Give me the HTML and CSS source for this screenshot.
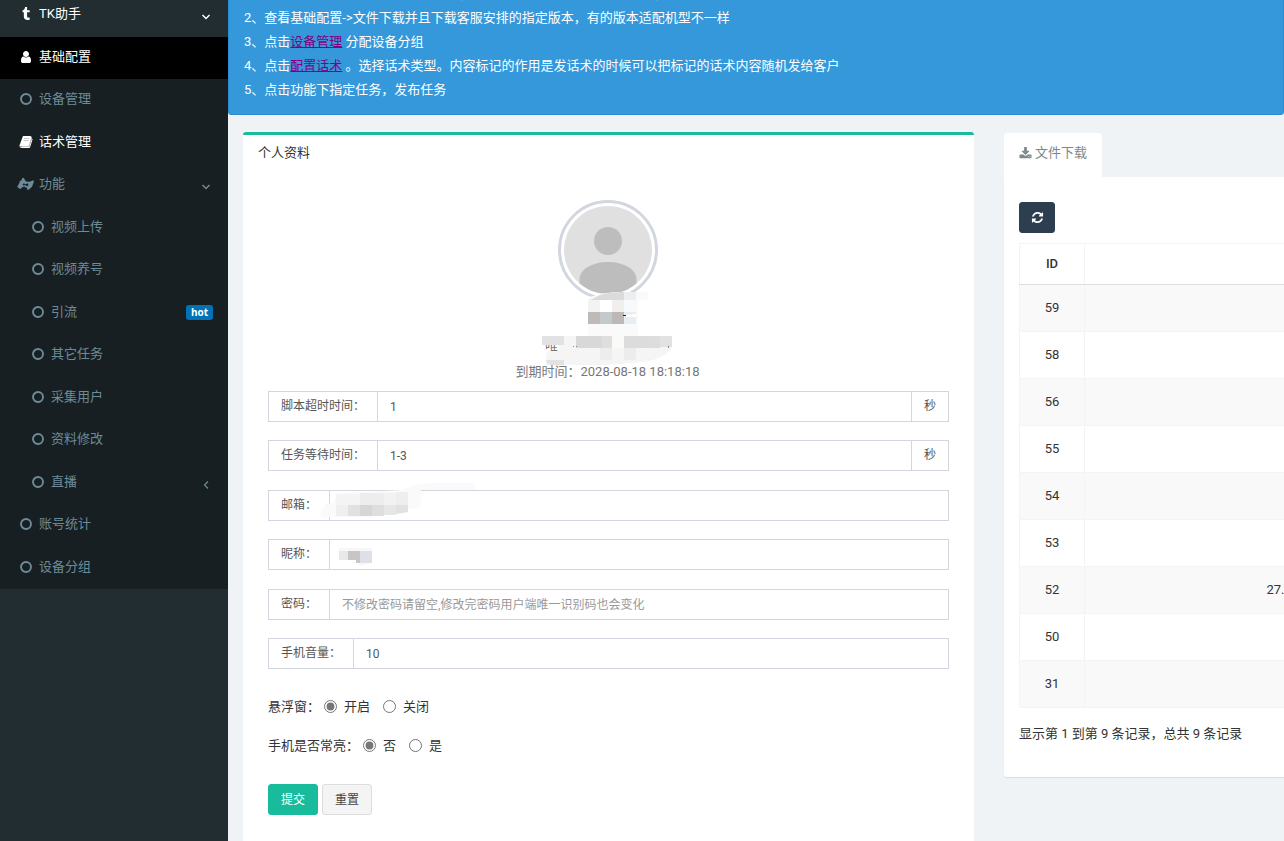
FILE: index.html
```html
<!DOCTYPE html>
<html lang="zh-CN">
<head>
<meta charset="utf-8">
<title>TK助手</title>
<link rel="stylesheet" href="styles.css">
</head>
<body>
<svg class="sprite" aria-hidden="true">
  <symbol id="tumblr" viewBox="0 0 1792 1792"><path d="M1328 1329l80 237q-23 35-111 66t-177 32q-104 2-190.5-26t-142.5-74-95-106-55.5-120-16.5-118v-544h-168v-215q72-26 129-69.5t91-90 58-102 34-99 15-88.5q1-5 4.5-8.5t7.5-3.5h244v424h333v252h-334v518q0 30 6.5 56t22.5 52.5 49.5 41.5 81.5 14q78-2 134-29z"/></symbol>
  <symbol id="user" viewBox="0 0 1792 1792"><path d="M1536 1399q0 109-62.500 187t-150.500 78h-854q-88 0-150.500-78t-62.500-187q0-85 8.500-160.500t31.500-152 58.500-131 94-89 134.500-34.500q131 128 313 128t313-128q76 0 134.500 34.500t94 89 58.500 131 31.500 152 8.500 160.500zm-256-887q0 159-112.500 271.500t-271.500 112.500-271.500-112.500-112.500-271.500 112.500-271.500 271.500-112.500 271.500 112.500 112.500 271.500z"/></symbol>
  <symbol id="book" viewBox="0 0 1792 1792"><path d="M420 1560L180 1440 560 200h1010l80 200-330 1120z" opacity=".75"/><path d="M1703 478q40 57 18 129l-275 906q-19 64-76.500 107.500t-122.500 43.500h-923q-77 0-148.500-53.500t-99.500-131.500q-24-67-2-127 0-4 3-27t4-37q1-8-3-21.500t-3-19.500q2-11 8-21t16.500-23.500 16.500-23.500q23-38 45-91.500t30-91.500q3-10 .5-30t-.5-28q3-11 17-28t17-23q21-36 42-92t25-90q1-9-2.500-32t.5-28q4-13 22-30.500t22-22.500q19-26 42.500-84.500t27.500-96.500q1-8-3-25.500t-2-26.500q2-8 9-18t18-23 17-21q8-12 16.500-30.500t15-35 16-36 19.500-32 26.500-23.500 36-11.500 47.500 5.500l-1 3q38-9 51-9h761q74 0 114 56t18 130l-274 906q-36 119-71.500 153.500t-128.500 34.500h-869q-27 0-38 15-11 16-1 43 24 70 144 70h923q29 0 56-15.500t35-41.500l300-987q7-22 5-57 38 15 59 43zm-1064 2q-4 13 2 22.500t20 9.500h608q13 0 25.500-9.500t16.500-22.500l21-64q4-13-2-22.500t-20-9.500h-608q-13 0-25.500 9.500t-16.500 22.500zm-83 256q-4 13 2 22.500t20 9.500h608q13 0 25.500-9.500t16.500-22.500l21-64q4-13-2-22.500t-20-9.500h-608q-13 0-25.500 9.500t-16.500 22.500z"/></symbol>
  <symbol id="ring" viewBox="0 0 14 14"><circle cx="7" cy="7" r="5" fill="none" stroke="currentColor" stroke-width="1.900"/></symbol>
  <symbol id="hands" viewBox="0 0 18 14"><path d="M5.500 1L7 .5l1 1.600 1.500 2.200 3.500.3L17.500 3l.4 1.500-2 5.500-3.500 3-2-.2.500-1.800-1.900-.3-1-1-2.500.8-1.500 1.500H2.500L.2 10l2.300-4L3 3.500l1.200.3zM7.500 6L6 7.500l.6 1.200L8.800 8l.8.9 1.600.4.900-1.500-1-1.600-2 1L8 7.300z" fill-rule="evenodd"/></symbol>
  <symbol id="down" viewBox="0 0 10 10"><path d="M1.500 3L5 6.500 8.500 3" fill="none" stroke="currentColor" stroke-width="1.500"/></symbol>
  <symbol id="left" viewBox="0 0 10 10"><path d="M7 1.500L3.500 5 7 8.500" fill="none" stroke="currentColor" stroke-width="1.200"/></symbol>
  <symbol id="download" viewBox="0 0 1792 1792"><path d="M1344 1344q0-26-19-45t-45-19-45 19-19 45 19 45 45 19 45-19 19-45zm256 0q0-26-19-45t-45-19-45 19-19 45 19 45 45 19 45-19 19-45zm128-224v320q0 40-28 68t-68 28h-1472q-40 0-68-28t-28-68v-320q0-40 28-68t68-28h465l135 136q58 56 136 56t136-56l136-136h464q40 0 68 28t28 68zm-325-569q17 41-14 70l-448 448q-18 19-45 19t-45-19l-448-448q-31-29-14-70 17-39 59-39h256v-448q0-26 19-45t45-19h256q26 0 45 19t19 45v448h256q42 0 59 39z"/></symbol>
  <symbol id="refresh" viewBox="0 0 1792 1792"><path d="M1639 1056q0 5-1 7-64 268-268 434.500t-478 166.500q-146 0-282.500-55t-243.500-157l-129 129q-19 19-45 19t-45-19-19-45v-448q0-26 19-45t45-19h448q26 0 45 19t19 45-19 45l-137 137q71 66 161 102t187 36q134 0 250-65t186-179q11-17 53-117 8-23 30-23h192q13 0 22.500 9.500t9.500 22.500zm25-800v448q0 26-19 45t-45 19h-448q-26 0-45-19t-19-45 19-45l138-138q-148-137-349-137-134 0-250 65t-186 179q-11 17-53 117-8 23-30 23h-199q-13 0-22.500-9.500t-9.500-22.500v-7q65-268 270-434.500t480-166.500q146 0 284 55.500t245 156.500l130-129q19-19 45-19t45 19 19 45z"/></symbol>
</svg>
<div class="app">
  <nav class="sidebar">
    <a class="item brand" href="#"><svg class="icon"><use href="#tumblr"/></svg><span>TK助手</span><svg class="arrow"><use href="#down"/></svg></a>
    <ul class="menu">
      <li><a class="item active" href="#"><svg class="icon"><use href="#user"/></svg><span>基础配置</span></a></li>
      <li><a class="item" href="#"><svg class="icon"><use href="#ring"/></svg><span>设备管理</span></a></li>
      <li><a class="item bright" href="#"><svg class="icon"><use href="#book"/></svg><span>话术管理</span></a></li>
      <li><a class="item" href="#"><svg class="icon wide"><use href="#hands"/></svg><span>功能</span><svg class="arrow"><use href="#down"/></svg></a></li>
      <li>
        <ul class="menu sub">
          <li><a class="item" href="#"><svg class="icon"><use href="#ring"/></svg><span>视频上传</span></a></li>
          <li><a class="item" href="#"><svg class="icon"><use href="#ring"/></svg><span>视频养号</span></a></li>
          <li><a class="item" href="#"><svg class="icon"><use href="#ring"/></svg><span>引流</span><small class="hot">hot</small></a></li>
          <li><a class="item" href="#"><svg class="icon"><use href="#ring"/></svg><span>其它任务</span></a></li>
          <li><a class="item" href="#"><svg class="icon"><use href="#ring"/></svg><span>采集用户</span></a></li>
          <li><a class="item" href="#"><svg class="icon"><use href="#ring"/></svg><span>资料修改</span></a></li>
          <li><a class="item" href="#"><svg class="icon"><use href="#ring"/></svg><span>直播</span><svg class="arrow"><use href="#left"/></svg></a></li>
        </ul>
      </li>
      <li><a class="item" href="#"><svg class="icon"><use href="#ring"/></svg><span>账号统计</span></a></li>
      <li><a class="item" href="#"><svg class="icon"><use href="#ring"/></svg><span>设备分组</span></a></li>
    </ul>
  </nav>
  <main class="main">
    <div class="notice">
      <p>1、先查看基础配置文件下载一份教程，配置环境下载必须要下载才可以，配置环境才能使用所有功能</p>
      <p>2、查看基础配置-&gt;文件下载并且下载客服安排的指定版本，有的版本适配机型不一样</p>
      <p>3、点击<a href="#">设备管理</a> 分配设备分组</p>
      <p>4、点击<a href="#">配置话术</a> 。选择话术类型。内容标记的作用是发话术的时候可以把标记的话术内容随机发给客户</p>
      <p>5、点击功能下指定任务，发布任务</p>
    </div>
    <div class="columns">
      <section class="panel profile">
        <h1 class="title">个人资料</h1>
        <div class="summary">
          <svg class="avatar" viewBox="0 0 100 100" role="img" aria-label="头像">
            <clipPath id="face"><circle cx="50" cy="50" r="44"/></clipPath>
            <circle cx="50" cy="50" r="48.500" fill="#fff" stroke="#d2d6de" stroke-width="3"/>
            <g clip-path="url(#face)"><rect width="100" height="100" fill="#e0e0e0"/><circle cx="50" cy="41" r="14" fill="#bdbdbd"/><path d="M21.500 100V78C23 68 36 62 50 62s27 6 28.500 16v22z" fill="#bdbdbd"/></g>
          </svg>
          <p class="uid">唯</p>
          <p class="expiry">到期时间：2028-08-18 18:18:18</p>
          <svg class="mask" viewBox="0 0 132 78" aria-hidden="true">
            <path d="M48 5Q62 0 80 0h26v8H96v36H46V6z" fill="#fafafa"/>
            <path d="M58 3Q68 0 82 0v8H48z" fill="#dadbdd"/><path d="M82 0h12v8H82z" fill="#eceef2"/>
            <path d="M46 8h12v12H46z" fill="#f3f3f2"/><path d="M58 8h12v12H58z" fill="#fff"/><path d="M70 8h12v12H70z" fill="#f0eeee"/><path d="M82 8h12v12H82z" fill="#f7f9fb"/>
            <path d="M46 20h12v12H46z" fill="#bebab7"/><path d="M58 20h12v12H58z" fill="#c4c9cc"/><path d="M70 20h12v12H70z" fill="#bdb7b5"/><path d="M82 20h12v12H82z" fill="#e8edf2"/><path d="M81 23h3v1h-3z" fill="#222"/><path d="M84 23l10-1v3H84z" fill="#fff"/>
            <path d="M0 44h130v9q-1 9-19 15-30 6-76 5H4V65q0-5 3-6h10v-6H0z" fill="#f5f5f5"/>
            <path d="M0 44h22v9H0z" fill="#e2e2e2"/><path d="M34 44h26v12H34z" fill="#d9d8d8"/><path d="M60 44h10v12H60z" fill="#dedede"/><path d="M70 44h12v12H70z" fill="#fafaf9"/><path d="M82 44h24v12H82z" fill="#dddcdc"/><path d="M106 44h12v12h-12z" fill="#ddd"/><path d="M118 44h12v11h-12z" fill="#e2e2e2"/>
            <path d="M4 68h18v5H8q-3-1-4-5z" fill="#e2e2e2"/><path d="M82 56h12v12H82z" fill="#ececec"/><path d="M58 56h12v12H58z" fill="#ededed"/>
            <path d="M31 54h1v1h-1zM34 54h1v1h-1zM126 54h1v2h-1z" fill="#888"/>
          </svg>
        </div>
        <form class="form">
          <div class="group"><label for="timeout">脚本超时时间：</label><input id="timeout" value="1"><span class="unit">秒</span></div>
          <div class="group"><label for="wait">任务等待时间：</label><input id="wait" value="1-3"><span class="unit">秒</span></div>
          <div class="group"><label for="email">邮箱：</label><input id="email">
            <svg class="mask-email" viewBox="0 0 156 34" aria-hidden="true">
              <path d="M18 10l66-3Q94 0 116 0h40v7h-54v17q-20 3-38 8-30 6-62 2V26H6v-5l8-1z" fill="#fafafa"/>
              <path d="M17 11h24v11H17z" fill="#f5f4f4"/><path d="M41 10h24v12H41z" fill="#ededed"/><path d="M65 10h12v12H65z" fill="#f2f2f2"/><path d="M77 9h12v13H77z" fill="#eee"/>
              <path d="M17 22h12v11H17z" fill="#f0eeee"/><path d="M29 22h12v11H29z" fill="#e1e1e1"/><path d="M41 22h12v11H41z" fill="#d6d6d6"/><path d="M53 22h12v11H53z" fill="#dedede"/><path d="M65 22h12v10H65z" fill="#e5e7e7"/><path d="M77 22h12v7l-12 2z" fill="#e3e0e2"/>
            </svg>
          </div>
          <div class="group"><label for="nick">昵称：</label><input id="nick">
            <svg class="mask-nick" viewBox="0 0 34 18" aria-hidden="true"><path d="M0 0h33v15l-13 3V12H0z" fill="#f7f7f7"/><path d="M0 3h9v9H0z" fill="#e9e8e7"/><path d="M9 3h12v12h-4v-3H9z" fill="#c8c6c4"/><path d="M21 3h12v12H21z" fill="#dde1e7"/></svg>
          </div>
          <div class="group"><label for="pass">密码：</label><input id="pass" type="password" placeholder="不修改密码请留空,修改完密码用户端唯一识别码也会变化"></div>
          <div class="group"><label for="volume">手机音量：</label><input id="volume" value="10"></div>
          <div class="choices" role="radiogroup" aria-label="悬浮窗"><span>悬浮窗：</span><label><input type="radio" name="float" checked>开启</label><label><input type="radio" name="float">关闭</label></div>
          <div class="choices" role="radiogroup" aria-label="手机是否常亮"><span>手机是否常亮：</span><label><input type="radio" name="awake" checked>否</label><label><input type="radio" name="awake">是</label></div>
          <div class="actions"><button class="btn submit" type="submit">提交</button><button class="btn" type="reset">重置</button></div>
        </form>
      </section>
      <section class="files">
        <a class="tab" href="#"><svg class="icon"><use href="#download"/></svg>文件下载</a>
        <div class="pane">
          <button class="btn refresh" type="button" aria-label="刷新"><svg class="icon"><use href="#refresh"/></svg></button>
          <table class="table">
            <colgroup><col class="col-id"><col class="col-version"><col></colgroup>
            <thead><tr><th>ID</th><th></th><th></th></tr></thead>
            <tbody>
              <tr><td>59</td><td></td><td></td></tr>
              <tr><td>58</td><td></td><td></td></tr>
              <tr><td>56</td><td></td><td></td></tr>
              <tr><td>55</td><td></td><td></td></tr>
              <tr><td>54</td><td></td><td></td></tr>
              <tr><td>53</td><td></td><td></td></tr>
              <tr><td>52</td><td>27.</td><td></td></tr>
              <tr><td>50</td><td></td><td></td></tr>
              <tr><td>31</td><td></td><td></td></tr>
            </tbody>
          </table>
          <p class="count">显示第 1 到第 9 条记录，总共 9 条记录</p>
        </div>
      </section>
    </div>
  </main>
</div>
</body>
</html>
```
FILE: styles.css
```css
* { box-sizing: border-box; }
body {
  margin: 0;
  overflow: hidden;
  background: #eff3f6;
  color: #333;
  font: 13px/18px Roboto, "Noto Sans CJK SC", sans-serif;
}
p, h1, ul { margin: 0; padding: 0; }
ul { list-style: none; }
.sprite { display: none; }
.app { display: flex; height: 100vh; overflow: hidden; }

.sidebar { flex: 0 0 228px; background: #222d32; }
.item {
  display: flex;
  align-items: center;
  padding: 11px 15px 13px;
  color: #6c8b99;
  text-decoration: none;
}
.icon { width: 13px; height: 13px; fill: currentColor; }
.item .icon { flex: none; width: 14px; height: 14px; margin: 0 6px 0 4px; }
.item .icon.wide { width: 17px; margin: 0 5px 0 2px; }
.arrow { width: 10px; height: 10px; margin: 5px 2px 0 auto; }
.item.brand { height: 37px; padding: 0 15px 9px; color: #fff; }
.menu { background: #181f22; }
.menu > li:nth-child(even) { padding-bottom: 1px; }
.item.active { background: #000; color: #fff; }
.item.bright { color: #fff; }
.sub .item { padding-left: 27px; }
.hot {
  margin-left: auto;
  padding: 0 5px;
  border-radius: 3px;
  background: #0073b7;
  color: #fff;
  font: bold 10px/15px "Open Sans", sans-serif;
}

.main { flex: 1; min-width: 0; }
.notice {
  margin-top: -19px;
  padding: 0 15px 12px;
  border: 1px solid #2a8bcf;
  border-radius: 3px;
  background: #3598db;
  color: #fff;
  line-height: 24px;
}
.notice a { color: #800080; text-decoration: underline; }
.columns {
  display: grid;
  grid-template-columns: repeat(2, 71.25%);
  gap: 30px;
  padding: 17px 15px 0;
}
.panel {
  min-height: 100vh;
  border-top: 3px solid #18bc9c;
  border-radius: 3px 3px 0 0;
  background: #fff;
}
.title { padding: 9px 15px; font-size: 13px; font-weight: 400; }
.summary {
  position: relative;
  display: flex;
  flex-direction: column;
  align-items: center;
  padding: 29px 2px 0 0;
  color: #777;
}
.avatar { width: 100px; height: 100px; }
.uid { margin-top: 37px; padding-right: 112px; }
.expiry { margin-top: 8px; }
.mask { position: absolute; top: 121px; left: calc(50% - 67px); width: 132px; }

.form { padding: 10px 25px; }
.group { position: relative; display: flex; height: 31px; margin-bottom: 18px; font-size: 12px; }
.group:nth-child(even) { margin-bottom: 19px; }
.group label, .unit { padding: 5px 12px; border: 1px solid #d2d6de; color: #555; }
.group label { border-right: 0; }
.unit { border-left: 0; }
.group input {
  flex: 1;
  min-width: 0;
  padding: 5px 12px;
  border: 1px solid #d2d6de;
  background: #fff;
  color: #555;
  font: inherit;
}
.group input::placeholder { color: #999; }
.mask-email { position: absolute; top: -7px; left: 51px; width: 156px; }
.mask-nick { position: absolute; top: 9px; left: 71px; width: 34px; }
.choices { display: flex; align-items: center; height: 39px; padding-bottom: 2px; }
.choices label { display: flex; align-items: center; margin-right: 13px; }
.choices input { width: 13px; height: 13px; margin: 0 7px 0 0; accent-color: #767676; }
.choices span { margin-right: 4px; }
.actions { display: flex; gap: 4px; margin-top: 18px; }
.btn {
  height: 31px;
  padding: 0 12px;
  border: 1px solid #ddd;
  border-radius: 3px;
  background: #f4f4f4;
  color: #444;
  font: 12px/18px Roboto, "Noto Sans CJK SC", sans-serif;
}
.submit { border-color: #18bc9c; background: #18bc9c; color: #fff; }

.files { padding-top: 1px; }
.tab {
  display: inline-flex;
  align-items: center;
  gap: 3px;
  height: 44px;
  padding: 0 15px 4px;
  border-radius: 3px 3px 0 0;
  background: #fff;
  color: #7b8a8b;
  text-decoration: none;
  vertical-align: top;
}
.pane {
  padding: 25px 15px 34px;
  border-radius: 0 0 3px 3px;
  background: #fff;
  box-shadow: 0 1px 1px #0000001a;
}
.refresh { display: block; width: 36px; padding: 0 11px; border-color: #2c3e50; background: #2c3e50; color: #fff; }
.refresh .icon { display: block; width: 13px; height: 13px; }
.table { width: 100%; margin-top: 10px; border-collapse: collapse; table-layout: fixed; text-align: center; }
.col-id { width: 65px; }
.col-version { width: 382px; }
.table th, .table td { border: 1px solid #f4f4f4; }
.table th { height: 41px; padding: 0; border-bottom-color: #ddd; font-weight: 500; }
.table td { height: 47px; padding: 0; }
.table tbody tr:nth-child(odd) { background: #f9f9f9; }
.count { margin-top: 17px; }
```
